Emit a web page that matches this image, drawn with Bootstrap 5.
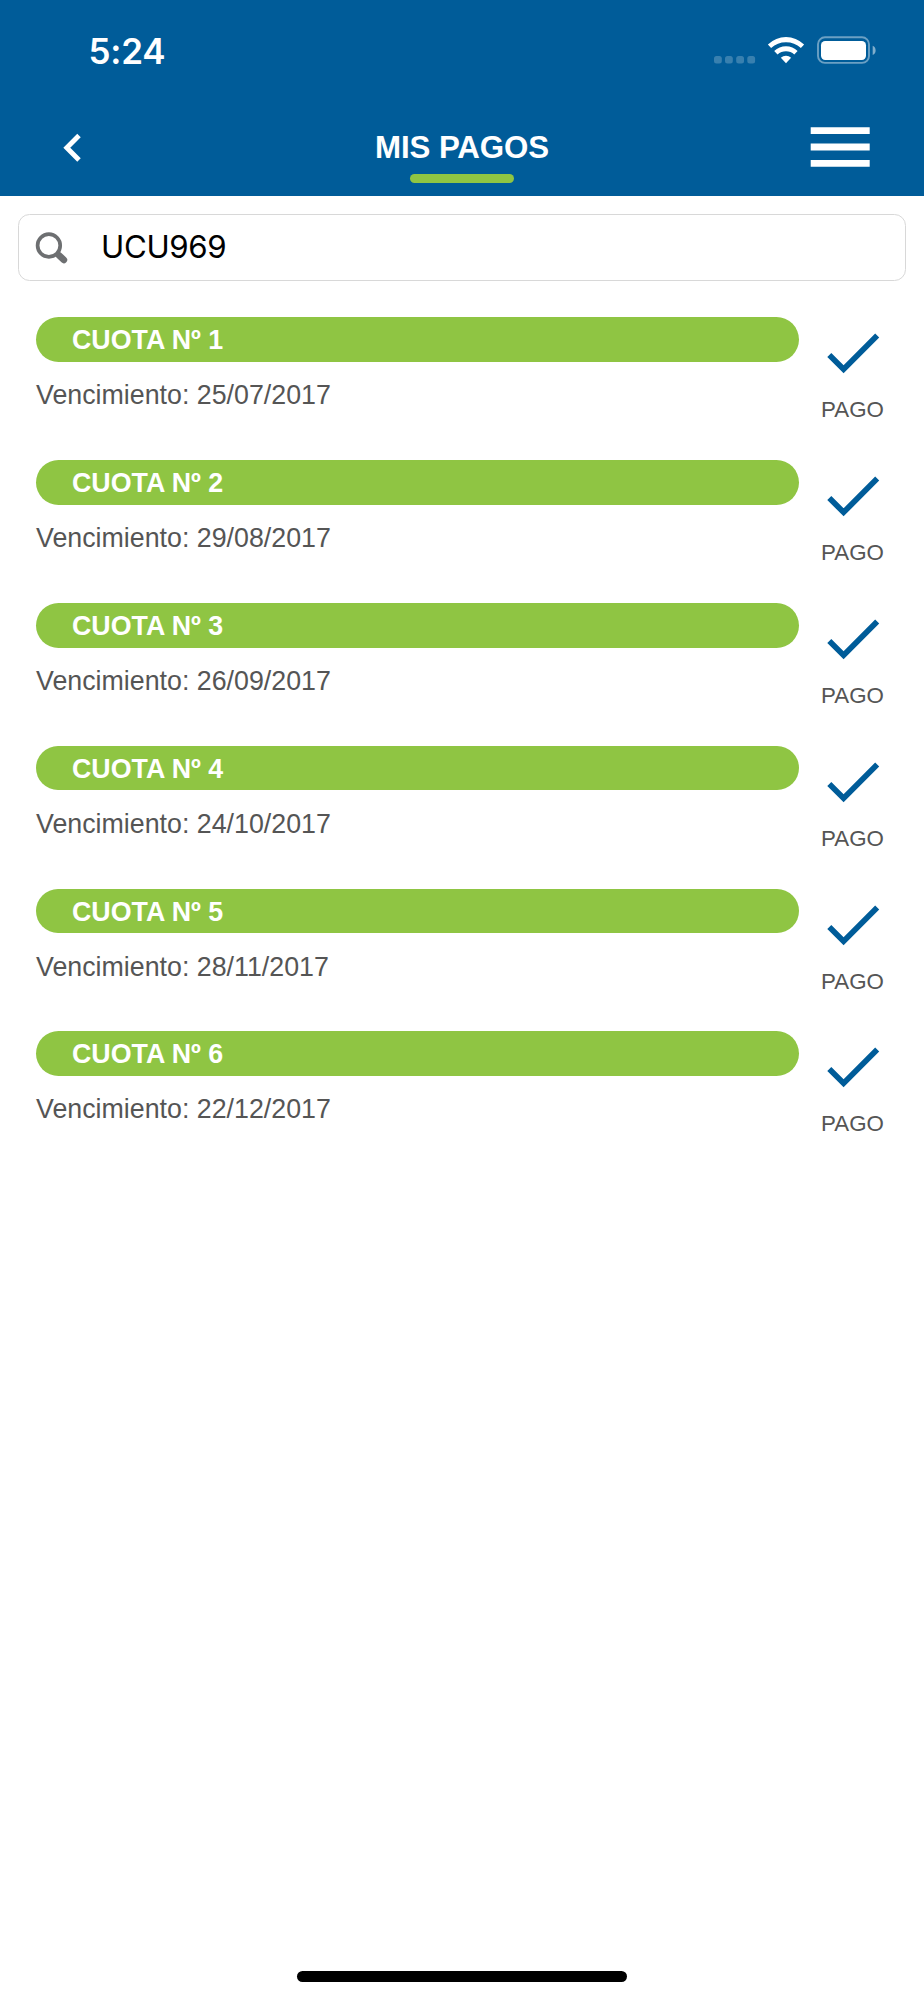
<!DOCTYPE html>
<html lang="es">
<head>
<meta charset="utf-8">
<meta name="viewport" content="width=device-width, initial-scale=1">
<title>Mis pagos</title>
<link href="https://cdn.jsdelivr.net/npm/bootstrap@5.3.0/dist/css/bootstrap.min.css" rel="stylesheet">
<style>
  :root { --brand: #005c99; --accent: #8fc543; }
  body { font-family: "Liberation Sans", Arial, sans-serif; color: #555; background: #fff; height: 2000px; }
  svg { display: block; }
  .top-area { background: var(--brand); height: 196.4px; }
  .status-bar { height: 98px; padding: 2px 48px 0 88.5px; }
  .clock { font: 600 35px/1 Inter, sans-serif; letter-spacing: -.2px; padding-top: 2px; }
  .status-bar svg { margin-top: -1px; }
  .title-bar { height: 98.4px; padding: 0 54px 0 62px; }
  .title-bar .side-start { width: 52px; }
  .title-bar .side-end { width: 60px; }
  .page-title { font-size: 31.25px; line-height: 36px; letter-spacing: -.1px; margin: 32px 0 7.8px; }
  .title-line { width: 103.5px; height: 9px; background: var(--accent); }
  .search-box { height: 67.4px; margin: 17.6px 18px 0; border: 1px solid #d8d8d8; border-radius: 11.5px; padding-left: 16px; }
  .search-box input { font: 400 31.25px/1.2 Inter, sans-serif; letter-spacing: -.35px; color: #000; margin-left: 32px; outline: 0; width: 600px; }
  .fees { margin: 35.8px 0 0; padding: 0 36px; }
  .fee { height: 142.86px; }
  .pill { height: 44.64px; width: 763px; background: var(--accent); font-size: 26.79px; line-height: 46px; padding-left: 36px; }
  .due { font-size: 26.79px; line-height: 32px; margin-top: 17.4px; }
  .state { width: 107px; padding-top: 16px; }
  .state svg { margin-left: 1px; }
  .state span { font-size: 22.32px; line-height: 26px; margin-top: 23px; }
  .home-bar { width: 330px; height: 11px; margin: auto auto 18px; }
</style>
</head>
<body class="d-flex flex-column">
<header class="top-area text-white">
  <div class="status-bar d-flex align-items-center justify-content-between">
    <span class="clock">5:24</span>
    <svg width="162" height="28" viewBox="714 36 162 28" fill="#fff">
      <g opacity=".22"><rect x="714" y="56" width="7.8" height="7.6" rx="2.5"/><rect x="725" y="56" width="7.8" height="7.6" rx="2.5"/><rect x="736.2" y="56" width="7.8" height="7.6" rx="2.5"/><rect x="747.3" y="56" width="7.8" height="7.6" rx="2.5"/></g>
      <path d="M767.9 44.6Q775.8 37 786 37T804.1 44.6L800.9 48Q794.6 42.2 786 42.2T771.1 48Z"/>
      <path d="M774.2 51.1Q779.2 46.3 786 46.3T797.6 51.1L794.3 54.5Q790.8 51.3 786 51.3T777.5 54.5Z"/>
      <path d="M780.8 57.8Q783 55.7 786 55.7T791.1 57.8L786 63.3Z"/>
      <rect x="818" y="37.3" width="51" height="25.6" rx="7" fill="none" stroke="#fff" stroke-width="1.9" opacity=".42"/>
      <rect x="821" y="41" width="45" height="19" rx="4.2"/>
      <path d="M872.7 45.8Q875.6 47.2 875.6 50.4T872.7 55Z" opacity=".5"/>
    </svg>
  </div>
  <div class="title-bar d-flex justify-content-between">
    <a class="side-start" href="#" aria-label="Volver"><svg class="mt-4" width="24" height="50" viewBox="62 122 24 50"><path d="M79 135.5L66.8 147.8L79 160.1" fill="none" stroke="#fff" stroke-width="4.9"/></svg></a>
    <div class="d-flex flex-column align-items-center">
      <h1 class="page-title fw-bold">MIS PAGOS</h1>
      <div class="title-line rounded-pill"></div>
    </div>
    <a class="side-end" href="#" aria-label="Menú"><svg class="mt-4" width="60" height="50" viewBox="810 122 60 50" fill="#fff"><path d="M810.7 127.2h59v6.9h-59zM810.7 143.5h59v7h-59zM810.7 160h59v6.8h-59z"/></svg></a>
  </div>
</header>
<div class="search-box d-flex align-items-center">
  <svg width="34" height="34" viewBox="35 231 34 34" fill="none" stroke="#6d6f71"><circle cx="48.9" cy="245.5" r="11.3" stroke-width="3.7"/><path d="M56.8 253.2L58.5 255" stroke-width="4"/><path d="M59.3 255.6L63.8 259.9" stroke-width="6.8" stroke-linecap="round"/></svg>
  <input class="border-0 p-0 bg-transparent" type="text" value="UCU969" aria-label="Patente">
</div>
<ul class="fees list-unstyled">
  <li class="fee d-flex"><div><div class="pill rounded-pill text-white fw-bold">CUOTA Nº 1</div><div class="due">Vencimiento: 25/07/2017</div></div><div class="state d-flex flex-column align-items-center flex-shrink-0"><svg width="53" height="41" viewBox="827 333 53 41"><path d="M829.3 355L843.6 369.3L877.2 335.6" fill="none" stroke="#005c99" stroke-width="5.7"/></svg><span>PAGO</span></div></li>
  <li class="fee d-flex"><div><div class="pill rounded-pill text-white fw-bold">CUOTA Nº 2</div><div class="due">Vencimiento: 29/08/2017</div></div><div class="state d-flex flex-column align-items-center flex-shrink-0"><svg width="53" height="41" viewBox="827 333 53 41"><path d="M829.3 355L843.6 369.3L877.2 335.6" fill="none" stroke="#005c99" stroke-width="5.7"/></svg><span>PAGO</span></div></li>
  <li class="fee d-flex"><div><div class="pill rounded-pill text-white fw-bold">CUOTA Nº 3</div><div class="due">Vencimiento: 26/09/2017</div></div><div class="state d-flex flex-column align-items-center flex-shrink-0"><svg width="53" height="41" viewBox="827 333 53 41"><path d="M829.3 355L843.6 369.3L877.2 335.6" fill="none" stroke="#005c99" stroke-width="5.7"/></svg><span>PAGO</span></div></li>
  <li class="fee d-flex"><div><div class="pill rounded-pill text-white fw-bold">CUOTA Nº 4</div><div class="due">Vencimiento: 24/10/2017</div></div><div class="state d-flex flex-column align-items-center flex-shrink-0"><svg width="53" height="41" viewBox="827 333 53 41"><path d="M829.3 355L843.6 369.3L877.2 335.6" fill="none" stroke="#005c99" stroke-width="5.7"/></svg><span>PAGO</span></div></li>
  <li class="fee d-flex"><div><div class="pill rounded-pill text-white fw-bold">CUOTA Nº 5</div><div class="due">Vencimiento: 28/11/2017</div></div><div class="state d-flex flex-column align-items-center flex-shrink-0"><svg width="53" height="41" viewBox="827 333 53 41"><path d="M829.3 355L843.6 369.3L877.2 335.6" fill="none" stroke="#005c99" stroke-width="5.7"/></svg><span>PAGO</span></div></li>
  <li class="fee d-flex"><div><div class="pill rounded-pill text-white fw-bold">CUOTA Nº 6</div><div class="due">Vencimiento: 22/12/2017</div></div><div class="state d-flex flex-column align-items-center flex-shrink-0"><svg width="53" height="41" viewBox="827 333 53 41"><path d="M829.3 355L843.6 369.3L877.2 335.6" fill="none" stroke="#005c99" stroke-width="5.7"/></svg><span>PAGO</span></div></li>
</ul>
<div class="home-bar rounded-pill bg-black"></div>
<script src="https://cdn.jsdelivr.net/npm/bootstrap@5.3.0/dist/js/bootstrap.bundle.min.js"></script>
</body>
</html>
